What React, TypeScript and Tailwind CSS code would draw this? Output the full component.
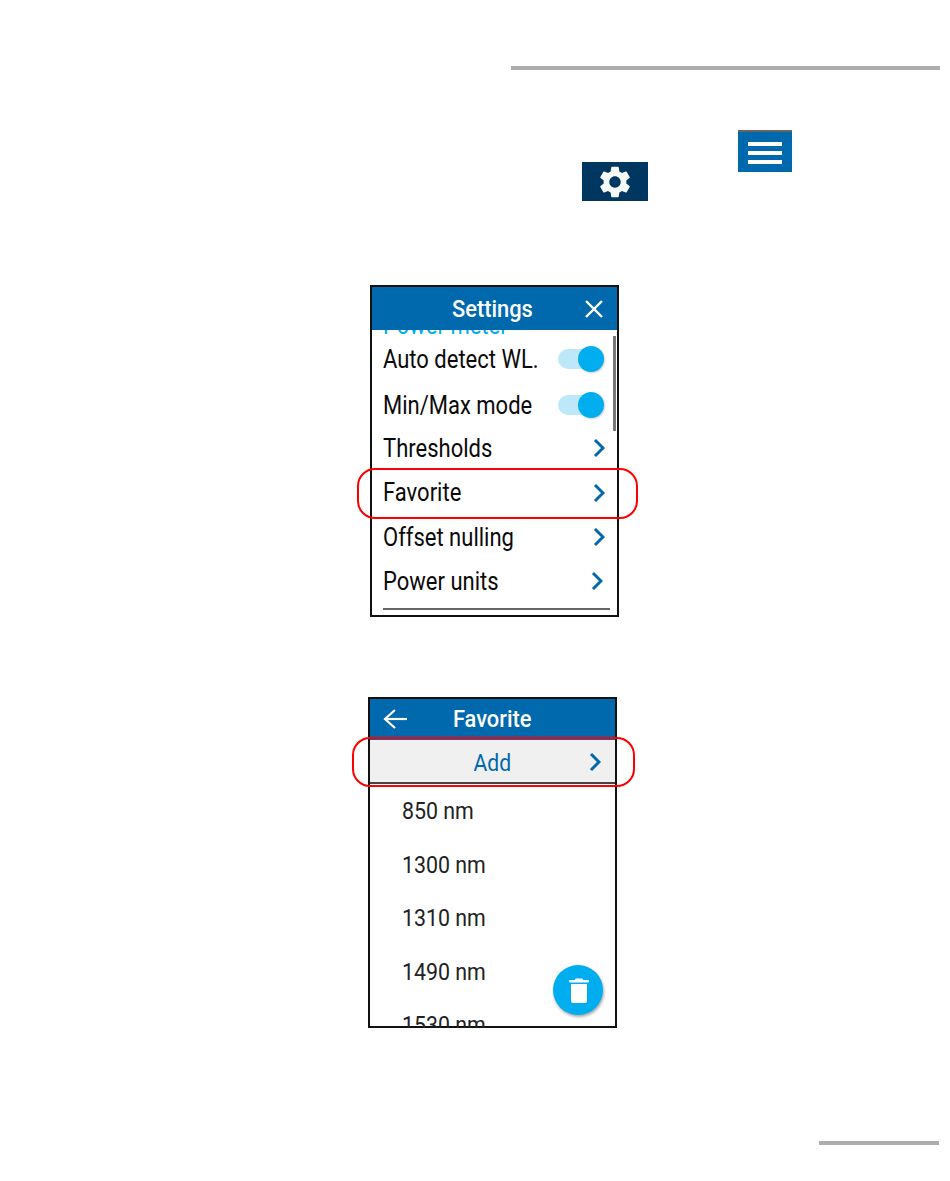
import { MdSettings } from "react-icons/md";

const font = "font-['Roboto',sans-serif]";

const Chevron = ({ className = "" }: { className?: string }) => (
  <svg viewBox="0 0 12 20" className={`w-3 h-5 shrink-0 ${className}`} fill="none" stroke="#0068ac" strokeWidth="3">
    <polyline points="2,2 10,10 2,18" />
  </svg>
);

const Toggle = () => (
  <div className="relative w-[46px] h-[26px] shrink-0 flex items-center">
    <div className="w-[38px] h-5 rounded-full bg-[#bde8fa]" />
    <div className="absolute right-0 top-0 w-[26px] h-[26px] rounded-full bg-[#00aeef] shadow-[1px_1px_2px_rgba(0,0,0,0.2)]" />
  </div>
);

const Label = ({ text }: { text: string }) => (
  <span className="block origin-left scale-x-[0.88] whitespace-nowrap text-[25px] leading-none text-[#0a0a0a]">{text}</span>
);

const ToggleRow = ({ text, className }: { text: string; className: string }) => (
  <div className={`flex items-center justify-between pl-[11px] pr-[13px] ${className}`}>
    <div className="min-w-0 flex-1">
      <Label text={text} />
    </div>
    <Toggle />
  </div>
);

const LinkRow = ({ text, className }: { text: string; className: string }) => (
  <div className={`flex items-center justify-between pl-[11px] ${className}`}>
    <Label text={text} />
    <Chevron />
  </div>
);

const Wavelength = ({ text }: { text: string }) => (
  <div className="flex items-center h-[53.5px] pl-8 shrink-0">
    <span className="block origin-left scale-x-[0.89] whitespace-nowrap text-[24px] leading-none text-[#222222]">{text}</span>
  </div>
);

export default function App() {
  return (
    <div className={`relative w-[950px] h-[1181px] bg-white overflow-hidden flex flex-col items-start ${font}`}>
      <div className="mt-[66px] ml-[511px] w-[429px] h-1 bg-[#adadad]" />

      <div className="mt-[60px] ml-[738px] w-[54px] h-[42px] bg-[#0068ac] border-t-2 border-[#666666] flex flex-col items-center gap-[5px] pt-[10px]">
        <div className="w-[34px] h-1 bg-white" />
        <div className="w-[34px] h-1 bg-white" />
        <div className="w-[34px] h-1 bg-white" />
      </div>

      <div className="-mt-[10px] ml-[582px] w-[66px] h-[39px] bg-[#003761] flex items-center justify-center">
        <MdSettings className="w-[38px] h-[38px] text-[#f5f9f5]" />
      </div>

      {/* settings screen */}
      <div className="relative mt-[84px] ml-[370px] w-[249px] h-[332px] border-2 border-[#111111]">
        <div className="relative z-10 h-[43px] bg-[#0068ac] flex items-center justify-center pr-[4px] text-white">
          <span className="block scale-x-[0.91] text-[24px] font-medium leading-none">Settings</span>
          <svg viewBox="0 0 20 20" className="absolute right-[13px] top-[12px] w-5 h-5" stroke="white" strokeWidth="2.4">
            <line x1="2" y1="2" x2="18" y2="18" />
            <line x1="18" y1="2" x2="2" y2="18" />
          </svg>
        </div>
        <div className="h-[285px] overflow-hidden">
          <div className="-mt-[17px] h-6 pl-[11px] flex items-center">
            <span className="block origin-left scale-x-[0.88] whitespace-nowrap text-[25px] leading-none text-[#00aeef]">Power meter</span>
          </div>
          <ToggleRow text="Auto detect WL." className="h-11" />
          <ToggleRow text="Min/Max mode" className="h-[45px] pt-[3px]" />
          <LinkRow text="Thresholds" className="h-11 pr-3" />
          <LinkRow text="Favorite" className="h-[45px] pr-3" />
          <LinkRow text="Offset nulling" className="h-11 pr-3" />
          <LinkRow text="Power units" className="h-11 pr-[14px]" />
          <div className="mt-[5px] ml-[11px] w-[227px] h-0.5 bg-[#666666]" />
        </div>
        {/* scrollbar */}
        <div className="absolute right-[1px] top-[49px] w-[3px] h-[95px] bg-[#777777]" />
        {/* callout */}
        <div className="absolute z-20 left-[-15px] top-[181px] w-[281px] h-[51px] rounded-[18px] border-2 border-[#ff0000]" />
      </div>

      {/* favorite screen */}
      <div className="relative mt-[80px] ml-[368px] w-[249px] h-[331px] border-2 border-[#111111]">
        <div className="relative h-[41px] bg-[#0068ac] flex items-center justify-center pb-[2px] text-white">
          <span className="block scale-x-[0.91] text-[24px] font-medium leading-none">Favorite</span>
          <svg viewBox="0 0 24 22" className="absolute left-[13px] top-[9px] w-6 h-[22px]" fill="none" stroke="white" strokeWidth="2.2">
            <polyline points="12,2 2,11 12,20" />
            <line x1="2" y1="11" x2="24" y2="11" />
          </svg>
        </div>
        <div className="relative h-[44px] bg-[#f0f0f0] border-b-2 border-[#444444] flex items-center justify-center pt-[3px]">
          <span className="block scale-x-[0.88] text-[24px] leading-none text-[#0068ac]">Add</span>
          <Chevron className="absolute right-[14px] top-[12px]" />
        </div>
        <div className="h-[244px] overflow-hidden flex flex-col pt-[0.5px]">
          <Wavelength text="850 nm" />
          <Wavelength text="1300 nm" />
          <Wavelength text="1310 nm" />
          <Wavelength text="1490 nm" />
          <Wavelength text="1530 nm" />
        </div>
        {/* delete button */}
        <div className="absolute left-[183px] top-[266px] w-[50px] h-[50px] rounded-full bg-[#00aeef] shadow-[1px_2px_3px_rgba(0,0,0,0.35)] flex items-center justify-center pl-[1px]">
          <svg viewBox="0 0 20 25" className="w-5 h-[25px]" fill="white">
            <rect x="0" y="2" width="20" height="2.5" rx="1" />
            <rect x="6" y="0.5" width="8" height="3" rx="1" />
            <path d="M2 6h16v17a2 2 0 0 1-2 2H4a2 2 0 0 1-2-2z" />
          </svg>
        </div>
        {/* callout */}
        <div className="absolute left-[-18px] top-[38px] w-[283px] h-[50px] rounded-[18px] border-2 border-[#ff0000]" />
      </div>

      <div className="mt-[113px] ml-[819px] w-[120px] h-1 bg-[#adadad]" />
    </div>
  );
}
